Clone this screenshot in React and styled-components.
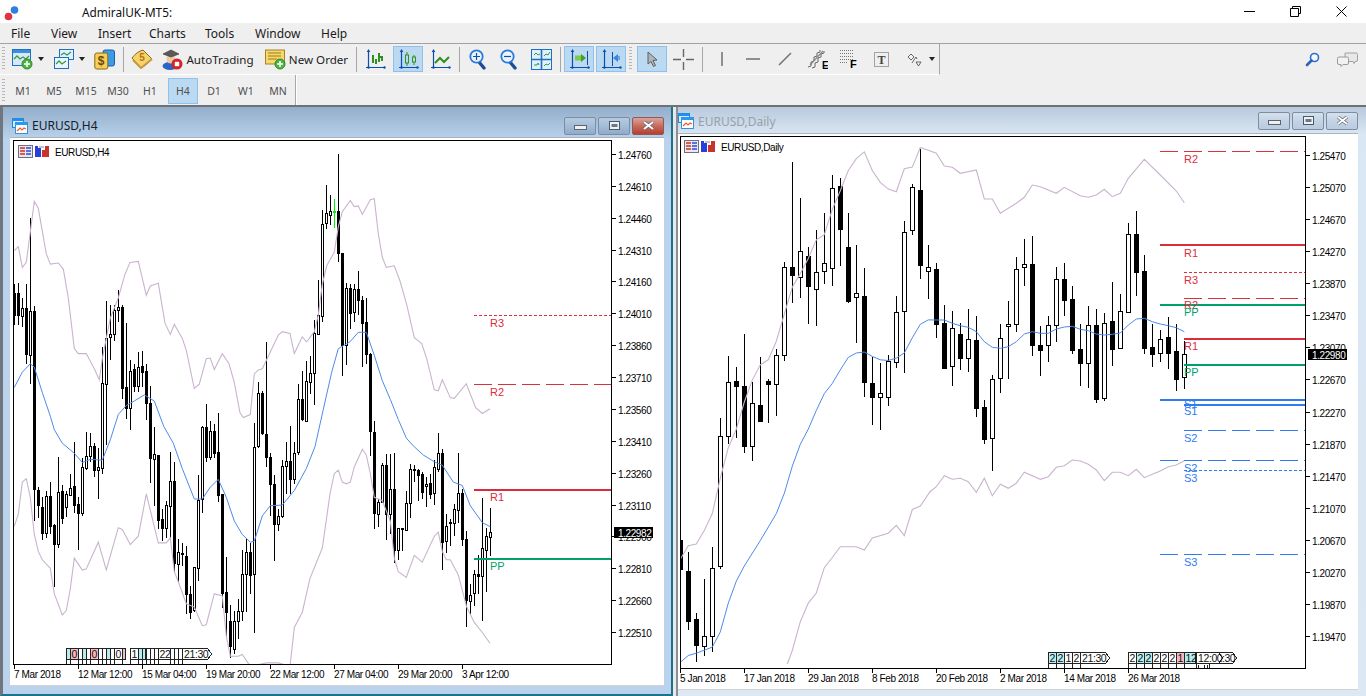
import React from "react";
import styled, { createGlobalStyle } from "styled-components";

const GlobalStyle = createGlobalStyle`
  html, body {
    margin: 0;
    height: 100%;
    overflow: hidden;
    background: #efefef;
    font-family: "Noto Sans", "Liberation Sans", sans-serif;
  }
`;

// chart values were read off 3x crops, so they go through these helpers
const Y_SCALE = 2.9585;
const toY = (v, y0, sy) => Math.round(y0 + v / sy);

const toCandles = (rows, xStart, step, y0, sy, startIndex = 0) =>
  rows.map(([h, t, b, l, filled, color], i) => ({
    x: xStart + step * (i + startIndex),
    h: toY(h, y0, sy),
    t: toY(t, y0, sy),
    b: toY(b, y0, sy),
    l: toY(l, y0, sy),
    filled,
    color,
  }));

const toPoints = (flat, x0, y0, sy) => {
  const out = [];
  for (let i = 0; i < flat.length; i += 2) {
    out.push(`${(x0 + flat[i] / 3).toFixed(1)},${(y0 + flat[i + 1] / sy).toFixed(1)}`);
  }
  return out.join(" ");
};

const h4Rows = [
  [430,455,520,550,1],[425,455,520,550,1],[470,500,525,555,0],[430,500,635,665,1],[235,510,638,725,0],
  [495,510,1035,1130,1],[1030,1038,1082,1120,1],[1060,1090,1165,1185,1],[1040,1057,1165,1180,0],[1015,1057,1145,1170,1],
  [1140,1142,1197,1325,1],[940,1045,1197,1210,0],[1025,1042,1122,1140,1],[1040,1050,1090,1118,0],[992,1032,1052,1055,0],
  [895,1027,1082,1105,1],[1060,1080,1105,1215,1],[945,970,1105,1115,0],[868,937,972,980,0],[870,908,938,955,0],
  [900,908,978,1000,1],[915,970,978,1065,0],[615,722,972,990,0],[480,588,724,905,0],[490,578,585,655,0],
  [490,507,578,598,0],[447,498,507,540,0],[490,497,737,770,1],[545,735,795,828,1],[655,685,795,860,0],
  [665,680,730,748,1],[630,676,730,748,0],[628,672,688,735,1],[665,686,780,830,1],[732,780,945,1018,1],
  [853,933,948,1085,0],[935,935,1127,1155,1],[1095,1125,1150,1190,1],[1072,1084,1150,1180,0],[927,1012,1085,1180,0],
  [955,1012,1255,1285,1],[1183,1222,1257,1312,0],[1195,1224,1226,1262,1],[1205,1235,1347,1405,1],[1322,1346,1398,1420,1],
  [1265,1267,1393,1400,0],[995,1067,1268,1308,0],[850,852,1065,1105,0],[785,852,940,955,1],[835,865,940,950,0],
  [842,865,928,945,1],[812,926,1052,1075,1],[1050,1050,1342,1388,1],[1238,1340,1398,1475,1],[1378,1425,1500,1535,1],
  [1395,1425,1510,1525,0],[1362,1395,1427,1480,0],[1215,1288,1395,1425,0],[1182,1222,1288,1400,0],[1195,1222,1290,1345,1],
  [840,912,1288,1462,0],[720,752,907,915,0],[745,752,870,875,1],[600,872,940,970,1],[930,942,1020,1115,1],
  [995,1020,1138,1248,1],[1095,1115,1138,1160,0],[950,968,1115,1120,0],[895,953,968,1050,0],[848,953,1005,1050,1],
  [895,928,1005,1020,0],[725,768,925,935,0],[685,768,828,835,1],[658,717,833,835,0],[642,692,720,755,0],
  [535,575,692,787,0],[418,522,577,578,0],[210,250,525,540,0],[137,220,248,265,0],[165,213,226,255,0],
  [178,213,215,262,1,"#00f000"],[45,213,338,365,1],[338,338,608,700,1],[425,442,608,668,0],[430,442,515,562,1],
  [430,445,512,540,0],[390,445,475,520,1],[465,475,543,675,1],[470,542,635,665,1],[632,635,865,937,1],
  [835,868,1105,1155,1],[1065,1075,1110,1148,0],[960,965,1075,1078,0],[932,965,1110,1185,1],[932,1035,1110,1170,0],
  [930,1035,1215,1255,1],[1150,1152,1217,1245,0],[1150,1152,1154,1218,1],[1040,1078,1157,1160,0],[962,977,1078,1120,0],
  [965,977,980,1015,1],[975,980,993,1070,1],[985,992,1043,1065,1],[1000,1020,1028,1088,0],[990,1017,1050,1065,1],
  [950,970,1048,1082,0],[870,930,975,985,0],[918,930,1193,1275,1],[1110,1145,1190,1225,0],[1125,1133,1137,1205,1],
  [1080,1095,1135,1175,0],[930,1048,1097,1135,0],[1035,1048,1182,1205,1],[1160,1182,1365,1445,1],[1318,1350,1366,1405,0],
  [1275,1288,1342,1382,0],[1230,1288,1292,1345,1],[1062,1210,1292,1425,0],[1150,1175,1215,1340,0],[1092,1163,1178,1235,0],
];

const dailyRowsA = [
  [1198,1198,1285,1290,1],[1235,1290,1437,1463,1],[1415,1432,1510,1560,1],[1315,1483,1513,1540,0],[1220,1282,1483,1530,0],
  [838,890,1276,1285,0],[655,730,890,913,0],[685,728,742,895,1],[590,744,921,940,1],[730,792,921,965,0],
  [658,800,845,848,1],[722,728,738,852,1],[632,652,738,830,0],[375,392,650,668,0],[80,392,415,497,1],
  [187,342,420,482,0],[332,357,448,558,1],[282,405,455,565,0],[232,378,403,440,0],[118,158,394,447,0],
  [128,150,277,388,1],[232,332,490,498,1],[326,466,478,615,0],[393,477,730,775,1],[658,735,775,858,1],
  [675,762,776,872,0],[652,668,776,802,0],[477,525,673,688,0],[255,288,520,703,0],[145,155,280,296,0],
  [40,163,384,425,1],[325,392,403,485,0],
];

const dailyRowsB = [
  [385,402,566,608,1],[510,564,698,702,1],[528,580,694,752,0],[565,598,668,705,1],[522,613,670,710,0],
  [543,616,818,845,1],[795,817,911,927,1],[720,733,910,1007,0],[567,610,730,773,0],[498,568,574,732,0],
  [366,403,568,590,0],[312,388,397,452,0],[303,388,630,662,1],[573,630,644,722,1],[543,571,630,680,0],
  [396,433,571,620,0],[385,433,494,543,1],[453,492,644,657,1],[567,643,683,752,1],[513,571,685,760,0],
  [522,571,791,803,1],[534,563,790,798,0],[440,558,641,692,1],[477,529,640,642,0],[264,298,532,534,0],
  [228,297,410,483,1],[360,408,638,656,1],[567,636,656,695,1],[584,613,655,680,0],[547,606,653,702,1],
  [567,648,731,767,1],[618,658,727,762,0],
];

const h4Candles = toCandles(h4Rows, 14, 4, 140, Y_SCALE);
const dailyCandles = [
  ...toCandles(dailyRowsA, 680, 8, 136, Y_SCALE),
  ...toCandles(dailyRowsB, 680, 8, 136, 3, 32),
];

const h4Lines = {
  ma: toPoints([13,735,37,690,61,665,73,675,97,750,121,820,133,860,157,900,193,930,217,957,241,948,277,950,301,890,325,815,349,788,373,775,403,757,433,775,461,850,490,900,517,975,553,1065,577,1065,601,1030,625,1007,649,1060,673,1130,697,1170,721,1193,733,1190,757,1115,781,1085,817,1083,853,1040,889,975], 10, 140, Y_SCALE)
    + " " + toPoints([45,910,70,800,95,690,115,620,150,600,175,572,199,572,223,640,247,715,271,770,295,830,319,885,340,908,370,935,403,955,427,965,460,1015,487,1025,511,1085,547,1135,571,1147], 300, 140, Y_SCALE),
  upper: toPoints([13,330,25,318,37,380,49,365,73,185,85,205,109,340,121,370,145,367,160,385,175,470,193,620,205,635,229,635,253,680,268,712,277,650,301,530,325,470,345,400,360,365,385,362,409,462,421,435,445,427,465,545,481,578,493,548,517,590,529,625,553,738,568,725,589,650,601,648,613,682,637,635,657,665,673,720,690,810,700,824,721,815,733,695,745,683,757,680,781,630,805,580,817,570,840,575,853,635,877,585,889,600], 10, 140, Y_SCALE)
    + " " + toPoints([20,600,43,570,55,520,67,430,80,375,103,335,115,260,127,215,151,182,163,200,175,198,187,223,211,180,223,177,235,280,247,350,259,380,283,375,300,420,320,490,343,588,365,605,380,650,403,742,415,745,427,712,451,765,463,767,499,724,527,795,547,812,570,798], 300, 140, Y_SCALE),
  lower: toPoints([13,1145,25,1110,37,1015,49,1005,61,1060,73,1170,85,1220,97,1245,121,1270,133,1345,157,1408,169,1395,181,1330,193,1240,217,1275,229,1272,265,1193,289,1275,325,1150,337,1155,361,1200,385,1175,409,1050,445,1195,469,1195,481,1180,493,1280,505,1310,529,1375,553,1385,577,1440,589,1437,613,1345,637,1352,649,1470,661,1530,685,1530,697,1525,721,1560,770,1550,805,1550,840,1560,853,1445,877,1400], 10, 140, Y_SCALE)
    + " " + toPoints([30,1300,67,1210,90,1050,103,990,115,980,127,1015,139,1020,151,1015,163,970,187,918,199,935,211,990,223,1060,247,1070,271,1130,283,1240,295,1280,319,1297,343,1232,367,1252,403,1175,415,1163,427,1220,439,1245,451,1245,475,1290,500,1385,523,1430,547,1460,570,1492], 300, 140, Y_SCALE),
};

const dailyLines = {
  ma: toPoints([7,1560,31,1540,55,1533,103,1515,127,1470,151,1385,175,1320,199,1275,247,1200,295,1120,319,1060,343,980,367,915,391,870,415,815,439,765,463,735,487,695,511,658,535,645,559,642,583,655,607,665,631,667,655,660,679,645,703,600,727,560,751,547], 678, 136, Y_SCALE)
    + " " + toPoints([19,555,43,555,67,565,91,572,115,577,139,590,163,620,187,637,211,640,235,635,259,620,283,597,307,590,331,595,355,595,379,582,403,576,427,574,451,583,475,587,499,597,523,600,547,598,571,594,595,570,619,552,643,550,667,560,691,567,715,572,739,578,763,590], 930, 136, 3),
  upper: toPoints([7,1255,31,1215,55,1210,79,1170,103,1120,127,1015,151,925,175,870,199,790,223,725,247,680,271,665,295,610,319,530,343,450,367,410,391,365,415,310,439,295,463,220,487,165,511,105,535,70,559,50,583,105,607,140,631,160,655,168,679,100,703,95,727,37,751,45], 678, 136, Y_SCALE)
    + " " + toPoints([19,55,43,93,67,97,91,115,139,105,163,192,187,192,211,235,259,205,283,187,307,150,331,155,379,175,403,157,451,182,475,187,499,180,523,163,547,185,571,175,595,130,643,73,691,120,739,168,763,203], 930, 136, 3),
  lower: toPoints([328,1565,343,1525,367,1440,391,1385,415,1355,439,1280,463,1250,487,1218,535,1218,559,1228,583,1192,631,1178,655,1155,679,1185,703,1108,727,1098], 678, 136, Y_SCALE)
    + " " + toPoints([0,1070,19,1055,43,1022,67,1033,91,1030,115,1040,139,1072,163,1030,187,1082,211,1048,235,1060,259,1045,283,1012,331,1033,355,1025,379,997,403,992,427,975,451,978,475,988,499,1005,523,1037,547,1012,571,1012,595,1022,619,1003,643,1028,667,1018,691,1008,715,995,739,990,763,977], 930, 136, 3),
};

const RED = "#dc2c3c";
const DASH_RED = "#d8303c";
const GREEN = "#00a26a";
const BLUE = "#2f7cf0";

const h4Levels = [
  { y: 316, x: 474, color: DASH_RED, dash: "3 2" },
  { y: 385, x: 474, color: DASH_RED, dash: "18 6" },
  { y: 490, x: 474, color: RED, thick: true },
  { y: 559, x: 474, color: GREEN, thick: true },
];
const h4Tags = [
  { x: 490, y: 328, text: "R3", color: RED },
  { x: 490, y: 397, text: "R2", color: RED },
  { x: 490, y: 502, text: "R1", color: RED },
  { x: 490, y: 571, text: "PP", color: GREEN },
];

const dailyLevels = [
  { y: 152, x: 1160, color: DASH_RED, dash: "18 6" },
  { y: 245, x: 1160, color: RED, thick: true },
  { y: 273, x: 1184, color: DASH_RED, dash: "3 2" },
  { y: 299, x: 1184, color: DASH_RED, dash: "18 6" },
  { y: 305, x: 1160, color: GREEN, thick: true },
  { y: 339, x: 1184, color: RED, thick: true },
  { y: 365, x: 1184, color: GREEN, thick: true },
  { y: 400, x: 1160, color: BLUE, thick: true },
  { y: 405, x: 1184, color: BLUE, thick: true },
  { y: 431, x: 1184, color: BLUE, dash: "18 6" },
  { y: 461, x: 1160, color: BLUE, dash: "18 6" },
  { y: 471, x: 1184, color: BLUE, dash: "3 2" },
  { y: 555, x: 1160, color: BLUE, dash: "18 6" },
];
const dailyTags = [
  { x: 1184, y: 164, text: "R2", color: RED },
  { x: 1184, y: 258, text: "R1", color: RED },
  { x: 1184, y: 285, text: "R3", color: RED },
  { x: 1184, y: 310, text: "R2", color: RED },
  { x: 1184, y: 317, text: "PP", color: GREEN },
  { x: 1184, y: 351, text: "R1", color: RED },
  { x: 1184, y: 377, text: "PP", color: GREEN },
  { x: 1184, y: 409, text: "S1", color: BLUE },
  { x: 1184, y: 416, text: "S1", color: BLUE },
  { x: 1184, y: 443, text: "S2", color: BLUE },
  { x: 1184, y: 473, text: "S2", color: BLUE },
  { x: 1184, y: 483, text: "S3", color: BLUE },
  { x: 1184, y: 567, text: "S3", color: BLUE },
];

const CYAN = "#b4eef0";
const PINK = "#f8b8c0";

const h4Marks = [
  [66,4,CYAN,""],[70,8,PINK,"0"],[78,4,"#fff",""],[82,4,CYAN,""],[86,4,"#fff",""],[90,8,PINK,"0"],[98,4,"#fff",""],[102,4,"#fff",""],
  [106,4,CYAN,""],[110,4,"#fff",""],[114,8,"#fff","0"],[122,3,PINK,""],[130,8,"#fff","1"],[138,4,CYAN,""],[142,3,CYAN,""],[146,4,"#fff",""],
  [150,4,"#fff",""],[154,4,"#fff",""],[158,12,"#fff","22"],[170,4,"#fff",""],[174,4,"#fff",""],[178,4,"#fff",""],
];
const dailyMarks = [
  [1048,8,CYAN,"2"],[1056,8,CYAN,"2"],[1064,8,"#fff","1"],[1072,8,"#fff","2"],
  [1128,8,"#fff","2"],[1136,8,CYAN,"2"],[1144,8,CYAN,"2"],[1152,8,"#fff","2"],[1160,8,"#fff","2"],[1168,8,"#fff","2"],
  [1176,8,PINK,"1"],[1184,11,CYAN,"12"],
];

const Page = styled.div`
  width: 1366px;
  height: 696px;
  display: flex;
  flex-direction: column;
  background: #efefef;
  color: #1a1a1a;
`;

const TitleRow = styled.div`
  height: 23px;
  background: #fff;
  display: flex;
  align-items: center;
`;

const AppName = styled.div`
  margin-left: 62px;
  font-size: 11.8px;
  color: #111;
`;

const WinControls = styled.div`
  margin-left: auto;
  display: flex;
  align-items: center;
  padding-right: 19px;
  gap: 35px;
  height: 20px;
`;

const MenuRow = styled.div`
  height: 20px;
  display: flex;
  align-items: center;
  padding-left: 11px;
  box-sizing: content-box;
`;

const MenuItem = styled.div`
  width: ${(p) => p.$w}px;
  font-size: 12px;
`;

const ToolRow = styled.div`
  height: 31px;
  display: flex;
  align-items: center;
  border-top: 1px solid #a3a3a3;
`;

const ToolGroup = styled.div`
  width: 939px;
  height: 30px;
  box-sizing: content-box;
  display: flex;
  align-items: center;
  padding-left: 0;
  border-right: 1px solid #a8a8a8;
  border-bottom: 1px solid #fff;
  position: relative;
`;

const Grip = styled.div`
  width: 3px;
  height: 24px;
  flex: none;
  margin: ${(p) => p.$m || "0 1px 0 2px"};
  background: repeating-linear-gradient(to bottom, #b5b5b5 0 1px, transparent 1px 3px);
`;

const ToolBtn = styled.div`
  width: ${(p) => p.$w || 32}px;
  height: 30px;
  flex: none;
  display: flex;
  align-items: center;
  justify-content: ${(p) => (p.$end ? "flex-end" : "center")};
  padding-right: ${(p) => (p.$end ? 4 : 0)}px;
  box-sizing: border-box;
  gap: ${(p) => p.$gap ?? 3}px;
  font-size: 11.6px;
  color: #222;
  white-space: nowrap;
`;

const ActiveFace = styled.div`
  width: 30px;
  height: 26px;
  display: flex;
  align-items: center;
  justify-content: center;
  background: #bcd9f2;
  border: 1px solid #8fc1ec;
  box-sizing: border-box;
`;

const Sep = styled.div`
  width: ${(p) => p.$w}px;
  height: 25px;
  flex: none;
  display: flex;
  justify-content: center;
  &::before {
    content: "";
    width: 1px;
    height: 100%;
    background: #a6a6a6;
  }
`;

const DropArrow = styled.span`
  width: 0;
  height: 0;
  border-left: 3.5px solid transparent;
  border-right: 3.5px solid transparent;
  border-top: 4px solid #222;
`;

const RightTools = styled.div`
  margin-left: auto;
  display: flex;
  align-items: center;
  gap: 17px;
  padding-right: 8px;
`;

const PeriodRow = styled.div`
  height: 30px;
  display: flex;
  background: #efefef;
`;

const PeriodGroup = styled.div`
  width: 295px;
  height: 31px;
  flex: none;
  display: flex;
  align-items: center;
  border-right: 1px solid #a8a8a8;
  box-shadow: 1px 0 0 #fff;
`;

const PeriodBtn = styled.div`
  width: ${(p) => (p.$active ? 30 : p.$w || 32)}px;
  height: 26px;
  margin-left: ${(p) => (p.$active ? 2 : 0)}px;
  flex: none;
  box-sizing: border-box;
  display: flex;
  align-items: center;
  justify-content: center;
  font-size: 10.5px;
  color: #505050;
  background: ${(p) => (p.$active ? "#bcd9f2" : "transparent")};
  border: 1px solid ${(p) => (p.$active ? "#8fc1ec" : "transparent")};
`;

const Workspace = styled.div`
  height: 591px;
  display: flex;
  background: #e9e9e9;
  border-top: 2px solid #6d7278;
  box-sizing: border-box;
`;

const ChartWindow = styled.div`
  width: ${(p) => (p.$active ? 673 : 690)}px;
  margin-left: ${(p) => (p.$active ? 0 : 3)}px;
  flex: none;
  display: flex;
  flex-direction: column;
  box-sizing: border-box;
  background: ${(p) =>
    p.$active
      ? "linear-gradient(to bottom, #93aecb 0, #bad2ec 32px, #bad2ec 100%)"
      : "linear-gradient(to bottom, #b9c9dc 0, #d9e6f3 27px, #dce8f4 100%)"};
  border-left: ${(p) => (p.$active ? "3px" : "2px")} solid ${(p) => (p.$active ? "#6f767d" : "#8c9096")};
  border-right: ${(p) => (p.$active ? "2px solid #17748c" : "0")};
  border-bottom: ${(p) => (p.$active ? "2px solid #17748c" : "0")};
  padding-right: ${(p) => (p.$active ? 7 : 8)}px;
  padding-left: ${(p) => (p.$active ? 7 : 0)}px;
`;

const WindowTitle = styled.div`
  height: ${(p) => (p.$active ? 30 : 26)}px;
  padding-top: ${(p) => (p.$active ? 7 : 2)}px;
  box-sizing: border-box;
  flex: none;
  display: flex;
  align-items: center;
  gap: 4px;
  font-size: 12px;
  color: ${(p) => (p.$active ? "#15202b" : "#98a0a8")};
  padding-left: ${(p) => (p.$active ? 2 : 0)}px;
`;

const WindowButtons = styled.div`
  margin-left: auto;
  display: flex;
  gap: 2px;
`;

const CaptionBtn = styled.div`
  width: 32px;
  height: 18px;
  box-sizing: border-box;
  border: 1px solid ${(p) => (p.$close ? "#8d5a58" : "#7d8ea3")};
  border-radius: 2px;
  display: flex;
  align-items: center;
  justify-content: center;
  background: ${(p) =>
    p.$close
      ? "linear-gradient(to bottom, #d9a49c 0, #c96a5c 50%, #b53e2e 100%)"
      : p.$active
      ? "linear-gradient(to bottom, #b7cbe2 0, #a4bcd8 50%, #90aac9 100%)"
      : "linear-gradient(to bottom, #d5e1ee 0, #c4d3e4 50%, #b9cbdf 100%)"};
`;

const ChartPanel = styled.div`
  flex: none;
  background: #fff;
  height: ${(p) => p.$h}px;
  line-height: 0;
  box-shadow: inset 0 1px 0 #aab4c0;
  border-bottom: 1px solid #d2d2d2;
  box-sizing: border-box;
`;

const ChartSvg = styled.svg`
  display: block;
  font-family: "Liberation Sans", Arial, sans-serif;
  font-size: 10px;
  letter-spacing: -0.4px;
`;

const Plain = styled.svg`
  display: block;
  flex: none;
`;

const Logo = () => (
  <Plain width="18" height="18" viewBox="0 0 18 18" style={{ marginLeft: 2 }}>
    <circle cx="12.5" cy="7" r="3.8" fill="#2f7fe0" />
    <circle cx="6.5" cy="13.5" r="3.8" fill="#df3340" />
  </Plain>
);

const AxisFrame = ({ c = "#0a4fb0" }) => (
  <g stroke={c} strokeWidth="1.2" fill={c}>
    <path d="M3.5 2v17M1 18.5h19" fill="none" />
    <path d="M3.5 0l1.8 3h-3.6z" stroke="none" />
    <circle cx="3.5" cy="18.5" r="1.2" stroke="none" />
    <circle cx="19.5" cy="18.5" r="1.2" stroke="none" />
  </g>
);

const Axes = ({ children }) => (
  <Plain width="21" height="21" viewBox="0 0 21 21">
    <AxisFrame />
    {children}
  </Plain>
);

const PlusBadge = () => (
  <g>
    <circle cx="15" cy="15" r="5" fill="#4cb43c" stroke="#2c8a2c" />
    <path d="M15 12v6M12 15h6" stroke="#fff" strokeWidth="1.6" />
  </g>
);

const NewChartIcon = () => (
  <Plain width="21" height="21" viewBox="0 0 21 21">
    <rect x="0.5" y="0.5" width="18" height="16" fill="#d6e9fa" stroke="#2070c0" />
    <rect x="1" y="1" width="17" height="3" fill="#3a8ee0" />
    <path d="M2 10l3-3 3 3 3-2 3 2 3-3" fill="none" stroke="#3e9a3e" strokeWidth="1.3" />
    <PlusBadge />
  </Plain>
);

const ProfileIcon = () => (
  <Plain width="20" height="20" viewBox="0 0 20 20">
    <rect x="5.5" y="0.5" width="14" height="10" fill="#dff0ff" stroke="#2070c0" />
    <rect x="0.5" y="8.5" width="14" height="11" fill="#e9f5ff" stroke="#2070c0" />
    <path d="M7 6l3-2 3 2 4-3" fill="none" stroke="#3a9a3a" strokeWidth="1.3" />
    <path d="M2 15l3-3 3 3 4-3" fill="none" stroke="#3a9a3a" strokeWidth="1.3" />
  </Plain>
);

const MarketIcon = () => (
  <Plain width="21" height="21" viewBox="0 0 21 21">
    <rect x="9" y="1" width="11.5" height="16" rx="2" fill="#3b9be8" stroke="#1c5fa8" />
    <rect x="0.8" y="4" width="13" height="16" rx="2" fill="#f7cf56" stroke="#8a6a18" />
    <text x="7.2" y="16" fontSize="12" fontWeight="700" textAnchor="middle" fill="#6a4a10" fontFamily="Liberation Sans">$</text>
  </Plain>
);

const BookIcon = () => (
  <Plain width="22" height="20" viewBox="0 0 22 20">
    <path d="M1 9C4 5 8 2 12 1l9 9c-3 3-7 7-11 9z" fill="#f5d469" stroke="#8b6a20" />
    <path d="M2 11l8 8 11-9" fill="none" stroke="#c89a40" strokeWidth="2" />
    <text x="11" y="12" fontSize="10" fontWeight="700" textAnchor="middle" fill="#b8741a" fontFamily="Liberation Sans">5</text>
  </Plain>
);

const AutoIcon = () => (
  <Plain width="21" height="21" viewBox="0 0 21 21">
    <ellipse cx="8" cy="17" rx="7.5" ry="4" fill="#2b66c4" />
    <circle cx="9" cy="10" r="4.5" fill="#f1c8a4" />
    <path d="M1 5l8-4 8 4-8 3z" fill="#5a5a5a" stroke="#333" strokeWidth="0.6" />
    <circle cx="15" cy="15" r="5.5" fill="#d4242a" />
    <rect x="12.8" y="12.8" width="4.4" height="4.4" fill="#fff" />
  </Plain>
);

const OrderIcon = () => (
  <Plain width="21" height="21" viewBox="0 0 21 21">
    <rect x="0.5" y="1" width="19" height="14" fill="#f6d86c" stroke="#a68220" />
    <path d="M3 4h13M3 7h13M3 10h9" stroke="#a07a18" strokeWidth="1" />
    <PlusBadge />
  </Plain>
);

const ZoomIcon = ({ minus }) => (
  <Plain width="17" height="21" viewBox="0 0 17 21">
    <path d="M10 13l5 6" stroke="#1a4f98" strokeWidth="3.4" strokeLinecap="round" />
    <circle cx="7.5" cy="7.5" r="6.2" fill="#eaf4ff" stroke="#2b7ad8" strokeWidth="1.8" />
    <path d={minus ? "M4 7.5h7" : "M4 7.5h7M7.5 4v7"} stroke="#1a4f98" strokeWidth="1.2" />
  </Plain>
);

const TileIcon = () => (
  <Plain width="21" height="21" viewBox="0 0 21 21">
    <rect x="0.5" y="0.5" width="20" height="20" fill="#dff0ff" stroke="#1f6fc0" />
    <path d="M10.5 0v21M0 10.5h21" stroke="#1f6fc0" strokeWidth="1.6" />
    <path d="M3 6l2-2 2 2 2-1M13 7l2-2 2 1 2-3M3 16h3l1-2 1 2M13 17l2-2 2 1 2-2" fill="none" stroke="#3a9a3a" />
  </Plain>
);

const BarsIcon = () => (
  <Axes>
    <path d="M8 14V6M11 10v5M14 4v9M17 7v5M7 12h1M14 8h2" stroke="#2f9020" strokeWidth="2" fill="none" />
  </Axes>
);

const CandlesIcon = () => (
  <Axes>
    <path d="M9 3v14M16 6v10" stroke="#2f9020" />
    <rect x="7.5" y="6" width="3" height="8" fill="#bcd9f2" stroke="#2f9020" />
    <rect x="14.5" y="8" width="3" height="5" fill="#bcd9f2" stroke="#2f9020" />
  </Axes>
);

const LineIcon = () => (
  <Axes>
    <path d="M5 14l5-5 4 4 5-5" fill="none" stroke="#2f9020" strokeWidth="2" />
  </Axes>
);

const ScrollIcon = () => (
  <Axes>
    <path d="M6 9h7" stroke="#7cc94c" strokeWidth="5" />
    <path d="M12 5l5 4-5 4z" fill="#48a020" />
    <path d="M18.5 2v14" stroke="#0a4fb0" />
  </Axes>
);

const ShiftIcon = () => (
  <Axes>
    <path d="M11.5 3v14" stroke="#0a4fb0" />
    <path d="M14 9h5" stroke="#6ea4e8" strokeWidth="4" />
    <path d="M17 5l-5 4 5 4z" fill="#3c86e0" />
  </Axes>
);

const CursorIcon = () => (
  <Plain width="13" height="17" viewBox="0 0 13 17">
    <path d="M2 1l9 8-4 .5 2.5 5-2 1-2.5-5L2 13z" fill="#aeb6bc" stroke="#5c6065" />
  </Plain>
);

const CrossIcon = () => (
  <Plain width="21" height="21" viewBox="0 0 21 21">
    <path d="M10.5 0v8M10.5 13v8M0 10.5h8M13 10.5h8" stroke="#666" strokeWidth="1.4" />
  </Plain>
);

const ShortLine = ({ d }) => (
  <Plain width="16" height="16" viewBox="0 0 16 16">
    <path d={d} stroke="#777" strokeWidth="1.6" />
  </Plain>
);

const ChannelIcon = () => (
  <Plain width="21" height="20" viewBox="0 0 21 20">
    <path d="M1 18l3-1v-4l3-1v-4l3-1V4l3-1V1M5 19l3-1v-4l3-1V9l3-1V5l3-1V2" fill="none" stroke="#666" />
    <path d="M3 16L16 2" stroke="#888" strokeWidth="1.2" />
    <text x="15" y="19.5" fontSize="10" fontWeight="700" fill="#000" fontFamily="Liberation Sans">E</text>
  </Plain>
);

const FiboIcon = () => (
  <Plain width="21" height="20" viewBox="0 0 21 20">
    <path d="M1 1.5h14M1 4.5h14M1 7.5h14M1 10.5h14M1 13.5h7" stroke="#777" strokeDasharray="1 1" />
    <text x="11" y="19" fontSize="11" fontWeight="700" fill="#000" fontFamily="Liberation Sans">F</text>
  </Plain>
);

const TextBoxIcon = () => (
  <Plain width="15" height="15" viewBox="0 0 15 15">
    <rect x="0.5" y="0.5" width="14" height="14" fill="none" stroke="#555" strokeDasharray="1 1" />
    <text x="7.5" y="12" fontSize="12" fontWeight="700" textAnchor="middle" fill="#444" fontFamily="Liberation Serif">T</text>
  </Plain>
);

const ShapesIcon = () => (
  <Plain width="15" height="16" viewBox="0 0 15 16">
    <path d="M1 6l3-3 3 3-3 3zM5 12l4-6 1 2M9 11h5l-2.5 4z" fill="#f4f4f4" stroke="#666" />
  </Plain>
);

const SearchIcon = () => (
  <Plain width="15" height="15" viewBox="0 0 15 15">
    <circle cx="9.5" cy="5.5" r="4" fill="#f4f8ff" stroke="#2f6fd0" strokeWidth="1.6" />
    <path d="M6.5 8.5L2 13" stroke="#2a62c0" strokeWidth="2.6" strokeLinecap="round" />
  </Plain>
);

const ChatIcon = () => (
  <Plain width="21" height="16" viewBox="0 0 21 16">
    <path d="M8 1h11a1.5 1.5 0 0 1 1.5 1.5V8A1.5 1.5 0 0 1 19 9.5h-1l-1 2-1-2H8z" fill="#e8e8e8" stroke="#a0a0a0" />
    <path d="M2 5h8a1.5 1.5 0 0 1 1.5 1.5V11A1.5 1.5 0 0 1 10 12.5H6l-2 2v-2H2A1.5 1.5 0 0 1 .5 11V6.5A1.5 1.5 0 0 1 2 5z" fill="#f2f2f2" stroke="#9a9a9a" />
  </Plain>
);

const WindowChartIcon = () => (
  <Plain width="16" height="16" viewBox="0 0 16 16">
    <rect x="0.5" y="0.5" width="11" height="9" fill="#d8ecff" stroke="#1e88e0" />
    <rect x="0.5" y="0.5" width="11" height="2.5" fill="#1e90f0" />
    <rect x="3.5" y="4.5" width="12" height="11" fill="#fff" stroke="#3a90d8" />
    <rect x="3.5" y="4.5" width="12" height="2.5" fill="#2a9af0" />
    <path d="M5 13l3-3 2 2 2-2 2 1" fill="none" stroke="#e2602c" strokeWidth="1.2" />
  </Plain>
);

const CaptionGlyph = ({ kind }) => (
  <Plain width="13" height="10" viewBox="0 0 13 10">
    {kind === "min" && <rect x="0.5" y="4.5" width="12" height="4" fill="#f0f0f0" stroke="#5a6470" />}
    {kind === "max" && (
      <g>
        <rect x="1.5" y="0.5" width="10" height="8" fill="#eef2f6" stroke="#4d5865" />
        <rect x="3.5" y="3" width="6" height="3" fill="#6d7885" />
      </g>
    )}
    {kind === "close" && (
      <g fill="none">
        <path d="M2 1l9 7M11 1L2 8" stroke="#5a6470" strokeWidth="3.4" />
        <path d="M2 1l9 7M11 1L2 8" stroke="#fff" strokeWidth="2" />
      </g>
    )}
  </Plain>
);

const ChartLegendIcons = ({ x, y }) => (
  <g transform={`translate(${x} ${y})`}>
    <rect x="0.5" y="0.5" width="14" height="12" fill="#e8e8f4" stroke="#70707c" />
    <rect x="2" y="2" width="5" height="2" fill="#e05a50" />
    <rect x="8" y="2" width="5" height="2" fill="#5a70e0" />
    <rect x="2" y="5" width="5" height="2" fill="#e05a50" />
    <rect x="8" y="5" width="5" height="2" fill="#5a70e0" />
    <rect x="2" y="8" width="5" height="2" fill="#e05a50" />
    <rect x="8" y="8" width="5" height="2" fill="#5a70e0" />
    <path d="M17 1h3v2h3v9h-6z" fill="#2a3fd8" />
    <path d="M24 12v-7h3V1h4v11z" fill="#c8342c" />
    <rect x="21" y="1" width="5" height="2" fill="#c4c4c4" />
  </g>
);

const MarkerStrip = ({ marks, top, base, last, ticks = [] }) => (
  <g fill="#111">
    {marks.map(([x, w, bg, label]) => (
      <g key={x}>
        <rect x={x + 0.5} y={top + 0.5} width={w} height={11} fill={bg} stroke="#222" />
        <path d={`M${x + 0.5} ${top + 11}V${base}`} stroke="#222" />
        {label && <text x={x + 1.5} y={top + 9.5} fontSize="10.5">{label}</text>}
      </g>
    ))}
    {last.map(([x, w, label]) => (
      <g key={x}>
        <path
          d={`M${x + 0.5} ${top + 0.5}h${w - 4}l4 5.5-4 5.5h-${w - 4}z`}
          fill="#fff"
          stroke="#222"
        />
        <path d={`M${x + 0.5} ${top + 11}V${base}`} stroke="#222" />
        <text x={x + 2} y={top + 9.5} fontSize="10.5">{label}</text>
      </g>
    ))}
    {ticks.map((x) => (
      <rect key={x} x={x} y={base - 3} width="1" height="3" fill="#222" />
    ))}
  </g>
);

const Candle = ({ c, half }) => {
  const stroke = c.color || "#000";
  return (
    <g>
      <rect x={c.x} y={c.h} width="1" height={Math.max(c.l - c.h, 1)} fill={stroke} />
      <rect x={c.x - half} y={c.t} width={half * 2 + 1} height={Math.max(c.b - c.t, 1) + 1} fill={stroke} />
      {!c.filled && (
        <rect x={c.x - half + 1} y={c.t + 1} width={half * 2 - 1} height={Math.max(c.b - c.t - 1, 0)} fill="#fff" />
      )}
    </g>
  );
};

const Chart = ({ box, plot, legend, title, prices, times, timeY, tag, candles, half, lines, levels, tags, marks, last, markTop, ticks }) => {
  const right = plot.x + plot.w;
  const bottom = plot.y + plot.h;
  return (
    <ChartSvg
      width={box.w}
      height={box.h}
      viewBox={`${box.x} ${box.y} ${box.w} ${box.h}`}
      shapeRendering="crispEdges"
    >
      <svg x={plot.x} y={plot.y} width={plot.w} height={plot.h} viewBox={`${plot.x} ${plot.y} ${plot.w} ${plot.h}`}>
        {candles.map((c) => (
          <Candle key={c.x} c={c} half={half} />
        ))}
        <g fill="none" shapeRendering="geometricPrecision">
          <polyline points={lines.upper} stroke="#c9b4ce" strokeWidth="1.1" />
          <polyline points={lines.lower} stroke="#c9b4ce" strokeWidth="1.1" />
          <polyline points={lines.ma} stroke="#4f8ae8" />
        </g>
        {levels
          .filter((l) => !l.dash)
          .map((l) => (
            <rect key={`${l.y}-${l.x}`} x={l.x} y={l.y} width={right - l.x} height="2" fill={l.color} />
          ))}
        {levels
          .filter((l) => l.dash)
          .map((l) => (
            <line
              key={`d${l.y}`}
              x1={l.x}
              x2={right}
              y1={l.y + 0.5}
              y2={l.y + 0.5}
              stroke={l.color}
              strokeDasharray={l.dash}
            />
          ))}
        {tags.map((t, i) => (
          <text key={i} x={t.x} y={t.y} fill={t.color} fontSize="11" letterSpacing="0" shapeRendering="auto">
            {t.text}
          </text>
        ))}
        <MarkerStrip marks={marks} top={markTop} base={bottom} last={last} ticks={ticks} />
      </svg>

      <rect x={plot.x - 1} y={plot.y - 1} width={plot.w + 1} height="1" fill="#000" />
      <rect x={plot.x - 1} y={plot.y - 1} width="1" height={plot.h + 1} fill="#000" />
      <rect x={right} y={plot.y - 1} width="1" height={plot.h + 2} fill="#000" />
      <rect x={plot.x - 1} y={bottom} width={plot.w + 2} height="1" fill="#000" />

      <ChartLegendIcons x={legend.x} y={legend.y} />
      <text x={legend.x + 37} y={legend.y + 11} fill="#000">{title}</text>

      {prices.map(([label, y]) => (
        <g key={label}>
          <rect x={right} y={y} width="5" height="1" fill="#000" />
          <text x={right + 7} y={y + 5} fill="#000">{label}</text>
        </g>
      ))}
      <rect x={tag.x} y={tag.y} width="39" height="11" fill="#000" />
      <text x={tag.x + 4} y={tag.y + 9.5} fill="#fff">{tag.text}</text>

      {times.map(([label, x]) => (
        <g key={label}>
          <rect x={x} y={bottom} width="1" height="5" fill="#000" />
          <text x={x} y={timeY} fill="#000">{label}</text>
        </g>
      ))}
    </ChartSvg>
  );
};

const h4Prices = ["1.24760","1.24610","1.24460","1.24310","1.24160","1.24010","1.23860","1.23710","1.23560","1.23410","1.23260","1.23110","1.22960","1.22810","1.22660","1.22510"]
  .map((label, i) => [label, Math.round(155 + i * 31.87)]);
const dailyPrices = ["1.25470","1.25070","1.24670","1.24270","1.23870","1.23470","1.23070","1.22670","1.22270","1.21870","1.21470","1.21070","1.20670","1.20270","1.19870","1.19470"]
  .map((label, i) => [label, Math.round(156 + i * 32.07)]);

const h4Times = [["7 Mar 2018",14],["12 Mar 12:00",78],["15 Mar 04:00",142],["19 Mar 20:00",206],["22 Mar 12:00",270],["27 Mar 04:00",334],["29 Mar 20:00",398],["3 Apr 12:00",462]];
const dailyTimes = [["5 Jan 2018",680],["17 Jan 2018",744],["29 Jan 2018",808],["8 Feb 2018",872],["20 Feb 2018",936],["2 Mar 2018",1000],["14 Mar 2018",1064],["26 Mar 2018",1128]];

const menus = [["File",40],["View",47],["Insert",51],["Charts",56],["Tools",50],["Window",66],["Help",40]];
const periods = ["M1","M5","M15","M30","H1","H4","D1","W1","MN"];

const WindowHead = ({ active, title }) => (
  <WindowTitle $active={active}>
    <WindowChartIcon />
    <span>{title}</span>
    <WindowButtons>
      <CaptionBtn $active={active}><CaptionGlyph kind="min" /></CaptionBtn>
      <CaptionBtn $active={active}><CaptionGlyph kind="max" /></CaptionBtn>
      <CaptionBtn $active={active} $close={active}><CaptionGlyph kind="close" /></CaptionBtn>
    </WindowButtons>
  </WindowTitle>
);

const App = () => {
  return (
    <Page>
      <GlobalStyle />
      <TitleRow>
        <Logo />
        <AppName>AdmiralUK-MT5:</AppName>
        <WinControls>
          <Plain width="11" height="11" viewBox="0 0 11 11"><path d="M0 5.5h11" stroke="#000" /></Plain>
          <Plain width="11" height="11" viewBox="0 0 11 11"><path d="M2.5 2.5V.5h8v7h-2M.5 2.5h8v8h-8z" fill="none" stroke="#000" /></Plain>
          <Plain width="11" height="11" viewBox="0 0 11 11"><path d="M.5.5l10 10M10.5.5l-10 10" stroke="#000" /></Plain>
        </WinControls>
      </TitleRow>

      <MenuRow>
        {menus.map(([label, w]) => (
          <MenuItem key={label} $w={w}>{label}</MenuItem>
        ))}
      </MenuRow>

      <ToolRow>
        <ToolGroup>
          <Grip />
          <ToolBtn $w={44} $gap={5}><NewChartIcon /><DropArrow /></ToolBtn>
          <ToolBtn $w={39} $gap={5}><ProfileIcon /><DropArrow /></ToolBtn>
          <ToolBtn $w={30}><MarketIcon /></ToolBtn>
          <Sep $w={8} />
          <ToolBtn $w={30}><BookIcon /></ToolBtn>
          <ToolBtn $w={102}><AutoIcon />AutoTrading</ToolBtn>
          <ToolBtn $w={95}><OrderIcon />New Order</ToolBtn>
          <Sep $w={5} />
          <ToolBtn $w={33}><BarsIcon /></ToolBtn>
          <ToolBtn><ActiveFace><CandlesIcon /></ActiveFace></ToolBtn>
          <ToolBtn><LineIcon /></ToolBtn>
          <Sep $w={6} />
          <ToolBtn $w={30}><ZoomIcon /></ToolBtn>
          <ToolBtn><ZoomIcon minus /></ToolBtn>
          <ToolBtn $w={34}><TileIcon /></ToolBtn>
          <Sep $w={5} />
          <ToolBtn><ActiveFace><ScrollIcon /></ActiveFace></ToolBtn>
          <ToolBtn><ActiveFace><ShiftIcon /></ActiveFace></ToolBtn>
          <Grip $m="0 4px 0 2px" />
          <ToolBtn><ActiveFace><CursorIcon /></ActiveFace></ToolBtn>
          <ToolBtn $w={30}><CrossIcon /></ToolBtn>
          <Sep $w={8} />
          <ToolBtn $w={31}><ShortLine d="M8 1v14" /></ToolBtn>
          <ToolBtn><ShortLine d="M1 8h14" /></ToolBtn>
          <ToolBtn><ShortLine d="M2 14L14 2" /></ToolBtn>
          <ToolBtn><ChannelIcon /></ToolBtn>
          <ToolBtn><FiboIcon /></ToolBtn>
          <ToolBtn><TextBoxIcon /></ToolBtn>
          <ToolBtn $w={42} $end $gap={7}><ShapesIcon /><DropArrow /></ToolBtn>
        </ToolGroup>
        <RightTools>
          <SearchIcon />
          <ChatIcon />
        </RightTools>
      </ToolRow>

      <PeriodRow>
        <PeriodGroup>
          <Grip />
          <ToolBtn $w={2} />
          {periods.map((p) => (
            <PeriodBtn key={p} $active={p === "H4"} $w={p === "M1" ? 30 : 32}>{p}</PeriodBtn>
          ))}
        </PeriodGroup>
      </PeriodRow>

      <Workspace>
        <ChartWindow $active>
          <WindowHead active title="EURUSD,H4" />
          <ChartPanel $h={549}>
            <Chart
              box={{ x: 10, y: 138, w: 653, h: 548 }}
              plot={{ x: 14, y: 142, w: 597, h: 523 }}
              legend={{ x: 18, y: 146 }}
              title="EURUSD,H4"
              prices={h4Prices}
              times={h4Times}
              timeY={679}
              tag={{ x: 614, y: 528, text: "1.22982" }}
              candles={h4Candles}
              half={1}
              lines={h4Lines}
              levels={h4Levels}
              tags={h4Tags}
              marks={h4Marks}
              last={[[182, 29, "21:30"]]}
              markTop={649}
            />
          </ChartPanel>
        </ChartWindow>

        <ChartWindow>
          <WindowHead title="EURUSD,Daily" />
          <ChartPanel $h={557}>
            <Chart
              box={{ x: 678, y: 134, w: 680, h: 556 }}
              plot={{ x: 681, y: 138, w: 624, h: 531 }}
              legend={{ x: 684, y: 141 }}
              title="EURUSD,Daily"
              prices={dailyPrices}
              times={dailyTimes}
              timeY={683}
              tag={{ x: 1308, y: 350, text: "1.22980" }}
              candles={dailyCandles}
              half={2}
              lines={dailyLines}
              levels={dailyLevels}
              tags={dailyTags}
              marks={dailyMarks}
              last={[[1209, 27, "21:30"], [1196, 26, "12:00"], [1080, 29, "21:30"]]}
              ticks={[1198, 1204, 1207]}
              markTop={653}
            />
          </ChartPanel>
        </ChartWindow>
      </Workspace>
    </Page>
  );
};

export default App;
